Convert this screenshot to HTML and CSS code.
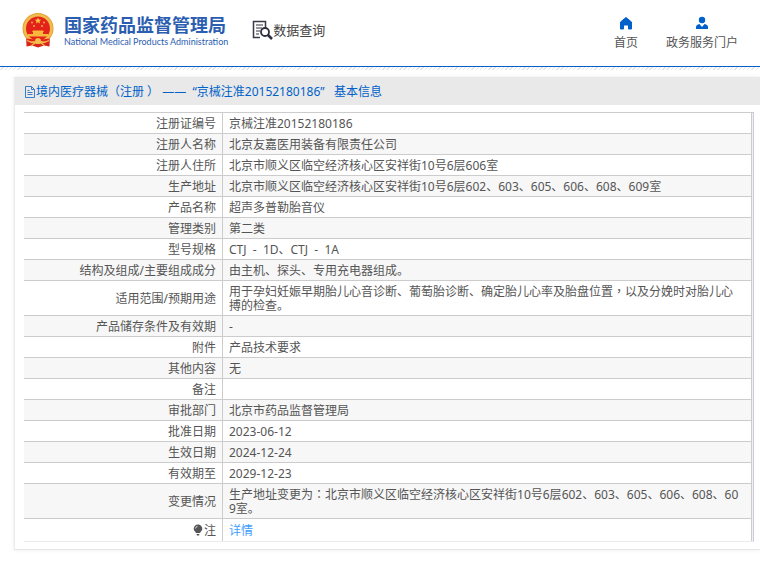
FILE: index.html
```html
<!DOCTYPE html>
<html lang="zh-CN">
  <head>
    <meta charset="UTF-8" />
    <meta name="viewport" content="width=device-width, initial-scale=1.0" />
    <title>国家药品监督管理局 数据查询</title>
    <link rel="stylesheet" href="styles.css">
  </head>
  <body>
    <header class="header">
      <div class="brand">
        <svg class="emblem" viewBox="0 0 32 35" aria-hidden="true">
          <path d="M4 22L4.500 33.500 10 32.500 16 34.500 22 32.500 27.500 33.500 28 22z" fill="#d9241c" />
          <circle cx="16" cy="15.500" r="15.500" fill="#e3a03a" />
          <circle cx="16" cy="15.500" r="14.500" fill="#f3bd4c" />
          <circle cx="16" cy="15.500" r="12" fill="#e3231b" />
          <path d="M16 4.500l.9 2.100 2.300.2-1.700 1.500.5 2.200-2-1.200-2 1.200.5-2.200-1.700-1.500 2.300-.2z" fill="#f8c33f" />
          <g fill="#f2a83a">
            <circle cx="10" cy="9.500" r="1" />
            <circle cx="22" cy="9.500" r="1" />
            <circle cx="12" cy="13" r="1" />
            <circle cx="20" cy="13" r="1" />
          </g>
          <path d="M11 17.500h10l1 1.500h-1v2h5v2.500H6V21h5v-2h-1z" fill="#f8b83c" />
          <path d="M5 25.500q11 2 22 0l-1 3H6z" fill="#e3231b" />
          <circle cx="16" cy="28" r="3" fill="#f3bd4c" />
          <path d="M5 27.500l5 2 3-1M27 27.500l-5 2-3-1M9 33l4-3M23 33l-4-3" fill="none" stroke="#f3bd4c" stroke-width="1.200" />
        </svg>
        <div class="brand-text">
          <span class="brand-cn">国家药品监督管理局</span>
          <span class="brand-en">National Medical Products Administration</span>
        </div>
      </div>

      <div class="query">
        <svg class="query-icon" viewBox="0 0 21 20" aria-hidden="true">
          <path d="M8 17.500H1.500v-16h12V8" fill="none" stroke="#3a3a48" stroke-width="1.500" />
          <path d="M4 5h7M4 8h6M4 11h4M4 14h3" stroke="#77777f" stroke-width="1.500" />
          <circle cx="13" cy="12" r="4" fill="#fff" stroke="#2e2e40" stroke-width="1.800" />
          <path d="M16 15l4 4" stroke="#2e2e40" stroke-width="2.500" />
        </svg>
        <span>数据查询</span>
      </div>

      <nav class="nav">
        <a class="nav-item" href="#">
          <svg class="nav-icon" viewBox="0 0 14 14" aria-hidden="true">
            <path d="M7 1.500L1.500 6v7H4.500V9h5v4h3V6z" fill="#0061c8" stroke="#0061c8" stroke-linejoin="round" />
          </svg>
          <span>首页</span>
        </a>
        <a class="nav-item" href="#">
          <svg class="nav-icon" viewBox="0 0 14 14" aria-hidden="true">
            <circle cx="7" cy="4" r="3.200" fill="#0061c8" />
            <path d="M1 13v-2q0-2 3.500-3L7 11l2.500-3Q13 9 13 11v2z" fill="#0061c8" />
          </svg>
          <span>政务服务门户</span>
        </a>
      </nav>
    </header>
    <div class="header-shade"></div>

    <main class="card">
      <h1 class="card-title">
        <svg class="title-icon" viewBox="0 0 12 12" aria-hidden="true">
          <path d="M1.500 .5h6l3 3v8h-9zM7.500 .5v3h3M3.500 4.500h2M3.500 6.500h5M3.500 8.500h5" fill="none" stroke="#3a7cc8" />
        </svg>
        <span>境内医疗器械（注册 ）&nbsp;——&nbsp; “京械注准20152180186”&nbsp;&nbsp; 基本信息</span>
      </h1>

      <div class="table-wrap">
        <table class="info">
          <tbody>
            <tr><th scope="row">注册证编号</th><td>京械注准20152180186</td></tr>
            <tr><th scope="row">注册人名称</th><td>北京友嘉医用装备有限责任公司</td></tr>
            <tr><th scope="row">注册人住所</th><td>北京市顺义区临空经济核心区安祥街10号6层606室</td></tr>
            <tr><th scope="row">生产地址</th><td>北京市顺义区临空经济核心区安祥街10号6层602、603、605、606、608、609室</td></tr>
            <tr><th scope="row">产品名称</th><td>超声多普勒胎音仪</td></tr>
            <tr><th scope="row">管理类别</th><td>第二类</td></tr>
            <tr><th scope="row">型号规格</th><td>CTJ&nbsp; -&nbsp; 1D、CTJ&nbsp; -&nbsp; 1A</td></tr>
            <tr><th scope="row">结构及组成/主要组成成分</th><td>由主机、探头、专用充电器组成。</td></tr>
            <tr><th scope="row">适用范围/预期用途</th><td>用于孕妇妊娠早期胎儿心音诊断、葡萄胎诊断、确定胎儿心率及胎盘位置<span class="mid" lang="zh-TW">，</span>以及分娩时对胎儿心搏的检查。</td></tr>
            <tr><th scope="row">产品储存条件及有效期</th><td>-</td></tr>
            <tr><th scope="row">附件</th><td>产品技术要求</td></tr>
            <tr><th scope="row">其他内容</th><td>无</td></tr>
            <tr><th scope="row">备注</th><td></td></tr>
            <tr><th scope="row">审批部门</th><td>北京市药品监督管理局</td></tr>
            <tr><th scope="row">批准日期</th><td>2023-06-12</td></tr>
            <tr><th scope="row">生效日期</th><td>2024-12-24</td></tr>
            <tr><th scope="row">有效期至</th><td>2029-12-23</td></tr>
            <tr><th scope="row">变更情况</th><td>生产地址变更为<span class="mid" lang="zh-TW">：</span>北京市顺义区临空经济核心区安祥街10号6层602、603、605、606、608、609室。</td></tr>
            <tr class="note">
              <th scope="row">
                <svg class="note-icon" viewBox="0 0 10 12" aria-hidden="true">
                  <path d="M5 .5a4.300 4.300 0 0 1 4.300 4.300C9.300 7 7.500 7.500 7 9H3C2.500 7.500.7 7 .7 4.800A4.300 4.300 0 0 1 5 .5zM3.500 10h3l-.5 1.500H4z" fill="#555" />
                  <path d="M2.500 4.500Q2.700 2.700 4.500 2.300" fill="none" stroke="#fff" stroke-width=".8" />
                </svg>注
              </th>
              <td><a class="detail" href="#">详情</a></td>
            </tr>
          </tbody>
        </table>
      </div>
    </main>
  </body>
</html>
```

FILE: styles.css
```css
* {
  box-sizing: border-box;
}

body {
  margin: 0;
  background-color: #fff;
  color: #555;
  font-family: "Noto Sans", "Noto Sans CJK SC", sans-serif;
  font-size: 12px;
  line-height: 14px;
}

a {
  text-decoration: none;
}

/* header */
.header {
  display: flex;
  align-items: center;
  height: 67px;
  padding: 0 22px 6px;
  border-bottom: 1px solid #0061c8;
}

.header-shade {
  height: 3px;
  background: repeating-linear-gradient(135deg, #fff 0 2px, #e4e4e8 2px 3px);
}

.brand {
  display: flex;
  align-items: center;
  gap: 10px;
}

.emblem {
  width: 32px;
  height: 35px;
}

.brand-text {
  display: flex;
  flex-direction: column;
  padding-top: 2px;
  color: #2b5db0;
  white-space: nowrap;
}

.brand-cn {
  font-size: 18px;
  font-weight: 700;
  line-height: 22px;
}

.brand-en {
  font-family: Lato, sans-serif;
  font-size: 9px;
  line-height: 12px;
}

.query {
  display: flex;
  align-items: center;
  margin-left: 24px;
  color: #444;
  font-size: 13px;
  line-height: 20px;
}

.query-icon {
  width: 21px;
  height: 20px;
}

.nav {
  display: flex;
  gap: 28px;
  margin-left: auto;
  padding-top: 6px;
}

.nav-item {
  display: flex;
  flex-direction: column;
  align-items: center;
  gap: 6px;
  color: #555;
}

.nav-icon {
  width: 14px;
  height: 14px;
}

/* card */
.card {
  margin: 7px 0 12px 14px;
  padding-bottom: 7px;
  border-left: 1px solid #ebebeb;
  border-bottom: 1px solid #e6e6e6;
  box-shadow: 0 0 4px rgba(0, 0, 0, 0.08);
}

.card-title {
  display: flex;
  align-items: center;
  height: 28px;
  margin: 0;
  padding: 2px 9px 0;
  background-color: #e9e9e9;
  color: #0061c8;
  font-size: 12px;
  font-weight: 400;
  white-space: nowrap;
}

.title-icon {
  width: 12px;
  height: 12px;
}

.table-wrap {
  margin: 7px 6px 0 9px;
  padding-right: 1px;
  border-top: 1px solid #ccc;
  border-right: 1px solid #ccccd4;
  border-bottom: 1px solid #ebebeb;
  background-color: #f0f0fa;
}

.info {
  width: 100%;
  border-collapse: separate;
  border-spacing: 0;
  background-color: #fff;
}

.info th,
.info td {
  height: 21px;
  padding: 4px 6px 2px;
  border-right: 1px solid #ccc;
  border-bottom: 1px solid #ccc;
  font-weight: 400;
}

.info th {
  width: 199px;
  text-align: right;
}

.info td {
  word-break: break-all;
}

.info tr:nth-child(even) {
  background-color: #f7f7f7;
}

.info .note th,
.info .note td {
  height: 22px;
  border-bottom: 0;
}

/* centred full-width punctuation */
.mid {
  font-family: "Noto Sans CJK TC", sans-serif;
  line-height: 12px;
}

.note-icon {
  width: 10px;
  height: 12px;
  margin-right: 1px;
  vertical-align: -1px;
}

.detail {
  color: #409eff;
}
```
